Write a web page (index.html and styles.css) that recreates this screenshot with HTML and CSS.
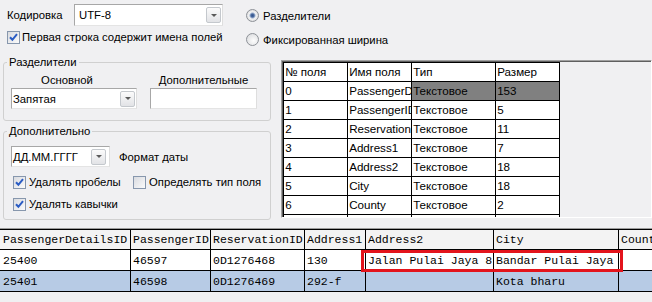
FILE: index.html
```html
<!DOCTYPE html>
<html lang="ru">
<head>
    <meta charset="UTF-8">
    <title>Импорт текстового файла</title>
    <link rel="stylesheet" href="styles.css">
</head>
<body>
    <div class="top">
        <div class="top-left">
            <div class="enc-row">
                <span class="enc-label">Кодировка</span>
                <div class="combo combo-enc"><span>UTF-8</span><i class="drop"></i></div>
            </div>
            <label class="check first-row">
                <span class="cb"><svg viewBox="0 0 11 11" width="11" height="11"><path d="M2 5.2l2.4 2.6 4.6-5.6" fill="none" stroke="#2a5cc4" stroke-width="2"/></svg></span>
                Первая строка содержит имена полей
            </label>
        </div>
        <div class="top-right">
            <label class="radio"><span class="rb on"></span>Разделители</label>
            <label class="radio"><span class="rb"></span>Фиксированная ширина</label>
        </div>
    </div>

    <div class="middle">
        <div class="side">
            <fieldset class="group">
                <legend>Разделители</legend>
                <div class="sep-body">
                    <div class="sep-col main-col">
                        <span class="cap">Основной</span>
                        <div class="combo combo-sep"><span>Запятая</span><i class="drop"></i></div>
                    </div>
                    <div class="sep-col extra-col">
                        <span class="cap">Дополнительные</span>
                        <div class="field"></div>
                    </div>
                </div>
            </fieldset>
            <fieldset class="group group-extra">
                <legend>Дополнительно</legend>
                <div class="extra-body">
                    <div class="date-row">
                        <div class="combo combo-date"><span>ДД.ММ.ГГГГ</span><i class="drop"></i></div>
                        <span class="date-label">Формат даты</span>
                    </div>
                    <div class="opt-row">
                        <label class="check opt-wide">
                            <span class="cb"><svg viewBox="0 0 11 11" width="11" height="11"><path d="M2 5.2l2.4 2.6 4.6-5.6" fill="none" stroke="#2a5cc4" stroke-width="2"/></svg></span>
                            Удалять пробелы
                        </label>
                        <label class="check"><span class="cb"></span>Определять тип поля</label>
                    </div>
                    <div class="opt-row">
                        <label class="check">
                            <span class="cb"><svg viewBox="0 0 11 11" width="11" height="11"><path d="M2 5.2l2.4 2.6 4.6-5.6" fill="none" stroke="#2a5cc4" stroke-width="2"/></svg></span>
                            Удалять кавычки
                        </label>
                    </div>
                </div>
            </fieldset>
        </div>

        <div class="fields-panel">
            <table class="fields">
                <colgroup><col class="fc"><col class="fc"><col class="fc-type"><col class="fc"></colgroup>
                <tr><td>№ поля</td><td>Имя поля</td><td>Тип</td><td>Размер</td></tr>
                <tr><td>0</td><td>PassengerDetailsID</td><td class="hl">Текстовое</td><td class="hl">153</td></tr>
                <tr><td>1</td><td>PassengerID</td><td>Текстовое</td><td>5</td></tr>
                <tr><td>2</td><td>ReservationID</td><td>Текстовое</td><td>11</td></tr>
                <tr><td>3</td><td>Address1</td><td>Текстовое</td><td>7</td></tr>
                <tr><td>4</td><td>Address2</td><td>Текстовое</td><td>18</td></tr>
                <tr><td>5</td><td>City</td><td>Текстовое</td><td>18</td></tr>
                <tr><td>6</td><td>County</td><td>Текстовое</td><td>2</td></tr>
                <tr><td>7</td><td>PostCode</td><td>Текстовое</td><td>5</td></tr>
            </table>
        </div>
    </div>

    <div class="data-panel">
        <table class="data">
            <colgroup>
                <col class="d1"><col class="d2"><col class="d3"><col class="d4">
                <col class="d5"><col class="d6"><col class="d7">
            </colgroup>
            <tr><th>PassengerDetailsID</th><th>PassengerID</th><th>ReservationID</th><th>Address1</th><th>Address2</th><th>City</th><th>County</th></tr>
            <tr><td>25400</td><td>46597</td><td>0D1276468</td><td>130</td><td>Jalan Pulai Jaya 8</td><td>Bandar Pulai Jaya</td><td></td></tr>
            <tr class="sel"><td>25401</td><td>46598</td><td>0D1276469</td><td>292-f</td><td></td><td>Kota bharu</td><td></td></tr>
        </table>
        <div class="mark"></div>
    </div>
</body>
</html>
```

FILE: styles.css
```css
* {
    box-sizing: border-box;
}
html, body {
    margin: 0;
}
body {
    width: 652px;
    height: 302px;
    overflow: hidden;
    background: #f0f0f2;
    font-family: "Liberation Sans", Arial, sans-serif;
    font-size: 11.3px;
    color: #000;
}

/* top rows */
.top {
    display: flex;
    height: 55px;
}
.top-left {
    width: 246px;
    padding: 4px 0 0 7px;
}
.enc-row {
    display: flex;
    align-items: center;
    height: 22px;
}
.enc-label {
    width: 67px;
}
.top-right {
    display: flex;
    flex-direction: column;
    gap: 9px;
    padding-top: 8px;
}

/* controls */
.combo {
    display: flex;
    align-items: center;
    justify-content: space-between;
    background: #fff;
    border: 1px solid;
    border-color: #a7a7a7 #dedede #e4e4e4 #a7a7a7;
}
.combo-enc {
    width: 149px;
    height: 22px;
    padding: 0 1px 0 4px;
}
.combo-sep {
    width: 126px;
    height: 21px;
    margin-top: 1px;
    padding: 0 1px 0 1px;
}
.combo-date {
    width: 99px;
    height: 21px;
    padding: 0 3px 0 1px;
}
.drop {
    display: flex;
    align-items: center;
    justify-content: center;
    width: 15px;
    height: 16px;
    border: 1px solid #c4c8cd;
    border-radius: 2px;
    background: linear-gradient(#fbfbfb, #e2e3e6);
}
.drop::after {
    content: "";
    border-left: 3px solid transparent;
    border-right: 3px solid transparent;
    border-top: 3px solid #5a5a5a;
}
.field {
    height: 21px;
    margin-top: 1px;
    background: #fff;
    border: 1px solid;
    border-color: #a7a7a7 #dedede #e4e4e4 #a7a7a7;
}

.check, .radio {
    display: flex;
    align-items: center;
}
.check {
    gap: 3px;
    height: 14px;
}
.first-row {
    margin-top: 4px;
    gap: 2px;
}
.radio {
    gap: 4px;
    height: 15px;
}
.cb {
    display: flex;
    align-items: center;
    justify-content: center;
    width: 13px;
    height: 13px;
    border: 1px solid #8797ad;
    background: linear-gradient(135deg, #d9dbe0, #fbfbfb);
}
.rb {
    width: 13px;
    height: 13px;
    border-radius: 50%;
    border: 1px solid #8d9197;
    background: radial-gradient(circle at 60% 60%, #fdfdfd, #d6d7da);
}
.rb.on {
    background: radial-gradient(circle, #34558c 0, #4a6aa0 1.6px, #b9c7dc 2.8px, #f2f2f2 3.6px, #d6d7da 6.5px);
}

/* left groups */
.middle {
    display: flex;
    height: 165px;
    padding-left: 3px;
}
.side {
    width: 269px;
}
.group {
    margin: 0;
    padding: 0;
    min-width: 0;
    border: 1px solid #d0d0d0;
    border-radius: 3px;
}
.group legend {
    margin-left: 3px;
    padding: 0 2px;
    line-height: 14px;
}
.group-extra {
    margin-top: 3px;
}
.sep-body {
    display: flex;
    padding: 4px 0 11px 7px;
}
.sep-col {
    display: flex;
    flex-direction: column;
}
.cap {
    line-height: 14px;
    text-align: center;
}
.main-col {
    width: 126px;
}
.main-col .cap {
    padding-right: 14px;
}
.extra-col {
    width: 107px;
    margin-left: 13px;
}
.extra-body {
    padding: 8px 0 8px 7px;
}
.date-row {
    display: flex;
    align-items: center;
    height: 21px;
}
.date-label {
    margin-left: 9px;
}
.opt-row {
    display: flex;
    align-items: center;
    height: 14px;
    margin-top: 8px;
    padding-left: 2px;
}
.opt-wide {
    width: 120px;
}

/* field list */
.fields-panel {
    width: 372px;
    height: 158px;
    margin: 5px 0 0 10px;
    padding: 1px 0 0 1px;
    overflow: hidden;
    border: 1px solid;
    border-color: #a0a0a0 #fff #fff #a0a0a0;
    box-shadow: inset 1px 1px 0 #5f5f5f;
}
.fields {
    border-collapse: separate;
    border-spacing: 0;
    table-layout: fixed;
    width: 257px;
    border-left: 1px solid #000;
    border-top: 1px solid #000;
    background: #fff;
    font-size: 11.6px;
}
.fc {
    width: 64px;
}
.fc-type {
    width: 84px;
}
.fields td {
    height: 19px;
    padding: 0 0 0 1px;
    line-height: 18px;
    border-right: 1px solid #000;
    border-bottom: 1px solid #000;
    white-space: nowrap;
    overflow: hidden;
}
.fields td.hl {
    background: #808080;
}

/* data preview */
.data-panel {
    position: relative;
    height: 74px;
    margin-top: 8px;
    border-top: 1px solid #9c9c9c;
    overflow: hidden;
}
.data {
    border-collapse: separate;
    border-spacing: 0;
    table-layout: fixed;
    width: 719px;
    border-top: 1px solid #000;
    font-family: "Liberation Mono", "Courier New", monospace;
    font-size: 11.5px;
}
.d1 { width: 131px; }
.d2 { width: 80px; }
.d3 { width: 94px; }
.d4 { width: 61px; }
.d5 { width: 128px; }
.d6 { width: 125px; }
.d7 { width: 100px; }
.data th, .data td {
    padding: 0 0 0 2px;
    border-right: 1px solid #000;
    border-bottom: 1px solid #000;
    white-space: nowrap;
    overflow: hidden;
    text-align: left;
    font-weight: normal;
}
.data th:first-child, .data td:first-child {
    padding-left: 3px;
}
.data th {
    height: 20px;
    background: #f3f3f3;
}
.data td {
    height: 21px;
    background: #fff;
}
.data .sel td {
    background: #b7cbe5;
}
.mark {
    position: absolute;
    left: 361px;
    top: 21px;
    width: 262px;
    height: 22px;
    border: 3px solid #e3141c;
}
```
